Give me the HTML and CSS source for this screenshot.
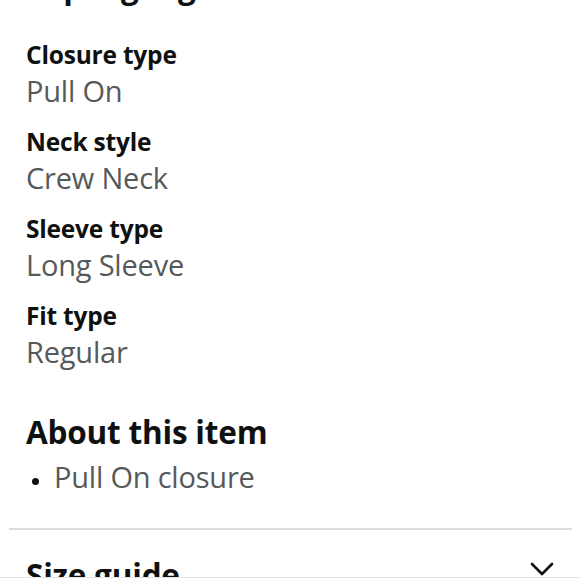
FILE: index.html
```html
<!DOCTYPE html>
<html lang="en">
<head>
<meta charset="utf-8">
<title>Top highlights</title>
<link rel="stylesheet" href="styles.css">
</head>
<body>
<main class="page">
  <section class="highlights">
    <h2 class="section-title top-title">Top highlights</h2>
    <dl class="specs">
      <div class="spec">
        <dt class="spec-label">Closure type</dt>
        <dd class="spec-value">Pull On</dd>
      </div>
      <div class="spec">
        <dt class="spec-label">Neck style</dt>
        <dd class="spec-value">Crew Neck</dd>
      </div>
      <div class="spec">
        <dt class="spec-label">Sleeve type</dt>
        <dd class="spec-value">Long Sleeve</dd>
      </div>
      <div class="spec">
        <dt class="spec-label">Fit type</dt>
        <dd class="spec-value">Regular</dd>
      </div>
    </dl>
  </section>
  <section class="about">
    <h2 class="section-title">About this item</h2>
    <ul class="bullets">
      <li class="bullet">Pull On closure</li>
    </ul>
  </section>
  <hr class="divider">
  <section class="accordion">
    <h2 class="section-title">Size guide</h2>
    <svg class="chevron" width="26" height="16" viewBox="0 0 26 16" aria-hidden="true">
      <path d="M3 3 L13 13 L23 3" fill="none" stroke="#0f1111" stroke-width="2.6" stroke-linecap="round" stroke-linejoin="round"/>
    </svg>
  </section>
</main>
<div class="bottom-bar"></div>
</body>
</html>
```
FILE: styles.css
```css
html, body {
  margin: 0;
  padding: 0;
  background: #ffffff;
}
body {
  font-family: "Open Sans", "Noto Sans", "Liberation Sans", sans-serif;
  color: #0f1111;
  overflow: hidden;
  height: 580px;
}
.page {
  display: flex;
  flex-direction: column;
}
.highlights, .about {
  padding: 0 26px;
}
.section-title {
  margin: 0;
  font-size: 31.5px;
  line-height: 40px;
  font-weight: 700;
  color: #0f1111;
  letter-spacing: -0.2px;
}
.top-title {
  margin-top: -34px;
  margin-bottom: 31px;
}
.specs {
  margin: 0;
  display: flex;
  flex-direction: column;
  gap: 15px;
}
.spec {
  display: flex;
  flex-direction: column;
}
.spec-label {
  font-size: 24.5px;
  line-height: 36px;
  font-weight: 700;
  letter-spacing: -0.2px;
}
.spec-value {
  margin: 0;
  font-size: 29px;
  line-height: 36px;
  color: #565959;
  letter-spacing: -0.2px;
}
.about {
  margin-top: 42px;
}
.bullets {
  margin: 7px 0 0;
  padding: 0;
  list-style: none;
}
.bullet {
  position: relative;
  padding-left: 28px;
  font-size: 29px;
  line-height: 36px;
  color: #565959;
  letter-spacing: -0.2px;
}
.bullet::before {
  content: "";
  position: absolute;
  left: 6px;
  top: 19px;
  width: 7px;
  height: 7px;
  border-radius: 50%;
  background: #0f1111;
}
.divider {
  margin: 33px 8px 0 9px;
  border: 0;
  height: 2px;
  background: #dddddd;
}
.accordion {
  margin-top: 25px;
  padding: 0 25px 0 26px;
  display: flex;
  align-items: center;
  justify-content: space-between;
}
.chevron {
  display: block;
  margin-top: -13px;
}
.bottom-bar {
  position: fixed;
  left: 0;
  right: 0;
  bottom: 0;
  height: 2px;
  background: #ffffff;
  border-top: 1px solid #e3e3e3;
}
```
